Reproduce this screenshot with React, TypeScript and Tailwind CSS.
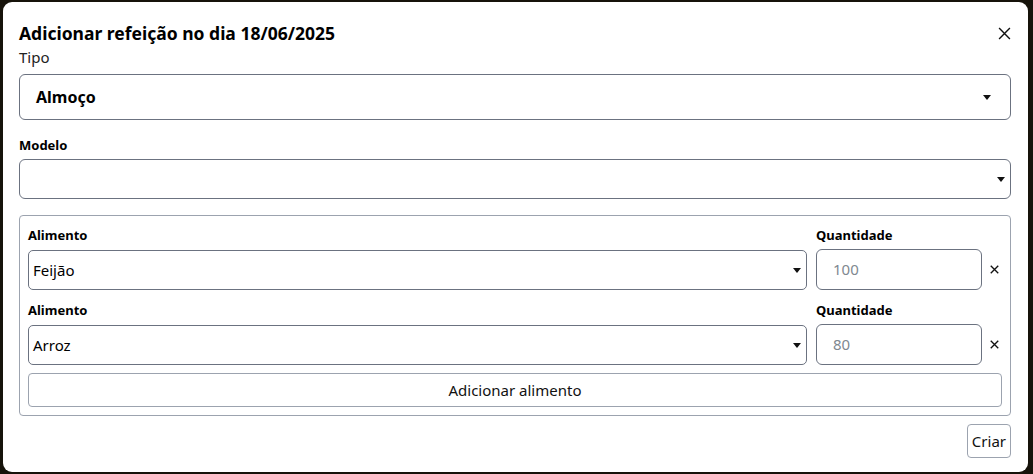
import React from "react";

// Modal "Adicionar refeição" recreated as a static form.

const font = { fontFamily: '"Noto Sans", "Open Sans", sans-serif' };

function Caret() {
  return (
    <svg width="8" height="5" viewBox="0 0 8 5" className="shrink-0">
      <path d="M0 0h8L4 5z" fill="#111" />
    </svg>
  );
}

function CloseIcon({ size = 12, stroke = 1.4 }: { size?: number; stroke?: number }) {
  return (
    <svg width={size} height={size} viewBox="0 0 12 12">
      <path d="M1 1l10 10M11 1L1 11" stroke="#111" strokeWidth={stroke} />
    </svg>
  );
}

type Item = { food: string; qty: string };

const ITEMS: Item[] = [
  { food: "Feijão", qty: "100" },
  { food: "Arroz", qty: "80" },
];

function FoodRow({ item }: { item: Item }) {
  return (
    <div className="flex items-end">
      <div className="flex flex-1 flex-col">
        <span className="text-[13px] font-bold leading-[18px] text-black">Alimento</span>
        <div className="mt-[6px] flex h-[40px] items-center justify-between rounded-[5px] border border-[#6b7280] pl-[4px] pr-[5px]">
          <span className="text-[15px] text-black">{item.food}</span>
          <Caret />
        </div>
      </div>
      <div className="ml-[9px] flex w-[166px] flex-col">
        <span className="text-[13px] font-bold leading-[18px] text-black">Quantidade</span>
        <div className="mt-[5px] flex h-[41px] items-center rounded-[6px] border border-[#6b7280] px-[16px]">
          <span className="text-[15px] text-[#808890]">{item.qty}</span>
        </div>
      </div>
      <div className="flex h-[41px] w-[20px] items-center justify-start pl-[8px]">
        <CloseIcon size={9} stroke={1.8} />
      </div>
    </div>
  );
}

export default function App() {
  return (
    <div className="h-[474px] w-[1033px] bg-[#16130a] pt-[2px] pl-[3px]" style={font}>
      <div className="flex h-[470px] w-[1025px] flex-col rounded-[9px] bg-white pl-[16px] pr-[17px] pt-[20px]">
        <div className="flex items-center justify-between">
          <h1 className="text-[17.5px] font-bold leading-[22px] text-black">
            Adicionar refeição no dia 18/06/2025
          </h1>
          <div className="mr-[0px]">
            <CloseIcon size={13} stroke={1.3} />
          </div>
        </div>

        <span className="mt-[3px] text-[15px] leading-[20px] text-[#222]">Tipo</span>
        <div className="mt-[7px] flex h-[46px] items-center justify-between rounded-[6px] border border-[#6b7280] pl-[16px] pr-[19px]">
          <span className="text-[16px] font-bold text-black">Almoço</span>
          <Caret />
        </div>

        <span className="mt-[16px] text-[13px] font-bold leading-[18px] text-black">Modelo</span>
        <div className="mt-[5px] flex h-[40px] items-center justify-end rounded-[6px] border border-[#6b7280] pr-[5px]">
          <Caret />
        </div>

        <div className="mt-[16px] flex flex-col rounded-[4px] border border-[#9ca3af] px-[8px] pt-[10px] pb-[8px]">
          <div className="flex flex-col gap-[11px]">
            {ITEMS.map((it) => (
              <FoodRow key={it.food} item={it} />
            ))}
          </div>
          <button className="mt-[8px] flex h-[34px] items-center justify-center rounded-[4px] border border-[#9ca3af] bg-white text-[15px] text-[#111]">
            Adicionar alimento
          </button>
        </div>

        <div className="mt-[8px] flex justify-end">
          <button className="flex h-[34px] items-center rounded-[4px] border border-[#9ca3af] bg-white px-[4px] text-[15px] text-[#111]">
            Criar
          </button>
        </div>
      </div>
    </div>
  );
}
